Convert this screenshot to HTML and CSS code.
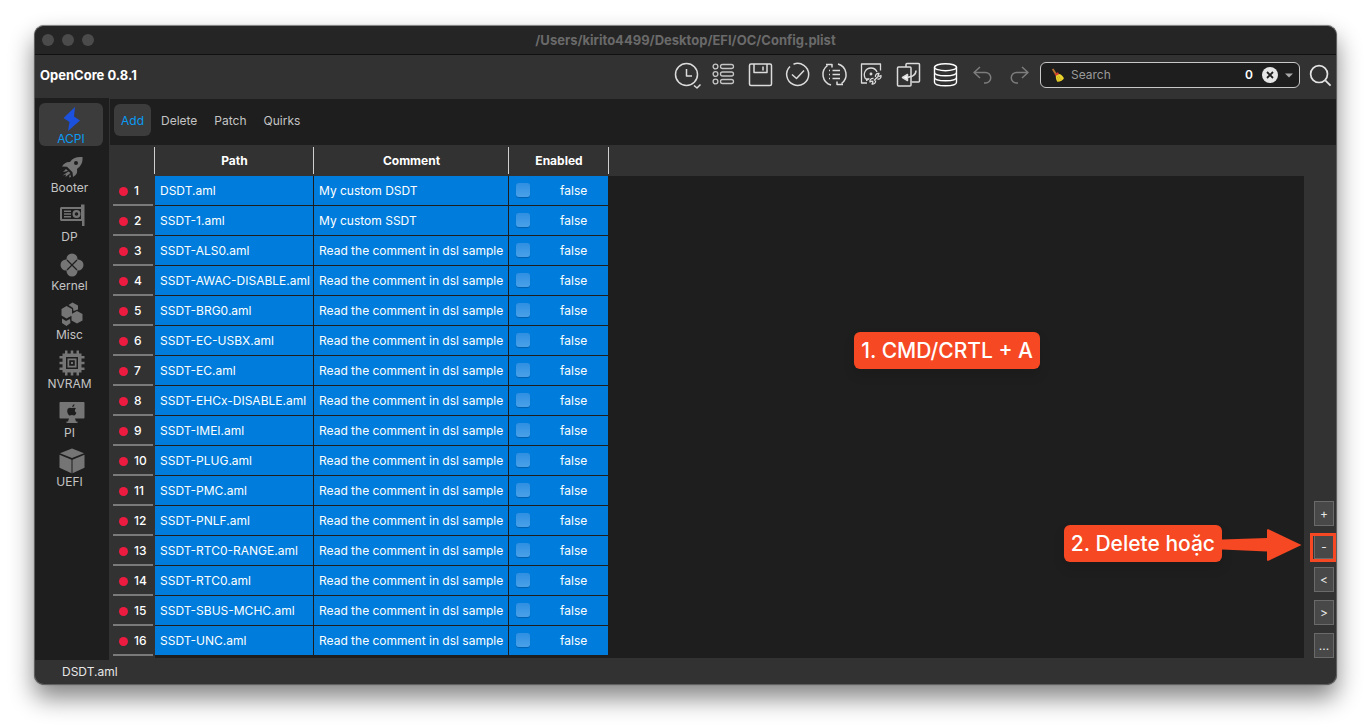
FILE: index.html
```html
<!DOCTYPE html>
<html lang="vi">
<head>
<meta charset="utf-8">
<title>OpenCore Configurator</title>
<link rel="stylesheet" href="styles.css">
</head>
<body>
<div class="window">
  <header class="titlebar">
    <div class="lights"><i></i><i></i><i></i></div>
    <h1 class="title">/Users/kirito4499/Desktop/EFI/OC/Config.plist</h1>
  </header>

  <div class="toolbar">
    <strong class="version">OpenCore 0.8.1</strong>
    <div class="tools">
      <button class="tool" aria-label="Recent files"><svg viewBox="0 0 28 28"><circle cx="13.500" cy="13.500" r="11"/><path d="M13.500 8v7h5.500M21 24.500l3 2.500 3.500-3.500"/></svg></button>
      <button class="tool" aria-label="List"><svg class="thin" viewBox="0 0 28 28"><circle cx="5.500" cy="5.500" r="2.400"/><circle cx="5.500" cy="13" r="2.400"/><circle cx="5.500" cy="20.500" r="2.400"/><rect x="10.500" y="3.500" width="13" height="4" rx="2"/><rect x="10.500" y="11" width="13" height="4" rx="2"/><rect x="10.500" y="18.500" width="13" height="4" rx="2"/></svg></button>
      <button class="tool" aria-label="Save"><svg viewBox="0 0 28 28"><rect x="2.500" y="3" width="22" height="21.500" rx="1.500"/><path d="M7 3v8.500h13V3M16 5.500v4"/></svg></button>
      <button class="tool" aria-label="Validate"><svg viewBox="0 0 28 28"><path d="M6 5.500A11 11 0 1 0 9.500 3.200M8 13.500l4.500 4 7.500-8"/></svg></button>
      <button class="tool" aria-label="Sync list"><svg viewBox="0 0 28 28"><path d="M10 24A11 11 0 0 1 6.500 4.500M17 3A11 11 0 0 1 20.500 22.500M5 3.500h6v3M22 23.500h-6v-3M11.500 9.500h7.500M11.500 13.500h7.500M11.500 17.500h7.500M8 9.500h1M8 13.500h1M8 17.500h1"/></svg></button>
      <button class="tool" aria-label="Mount disk"><svg class="fine" viewBox="0 0 28 28"><path d="M9 22H3.500V3h19v6.500M7.500 18c-3-5.500 0-11 5.500-11 3 0 5 1.500 6 4M7.500 18h3.500M8 19.500c2 0 2-2 3.500-1.500M16 19.500l4-4"/><circle cx="13" cy="13" r=".8"/><path d="M17.500 16c-.5-2 1-4 3.500-3.500l-1 2 1 1 2-1c.5 2.500-1.500 4-3.500 3.500M17.500 19.500c.5 2-1 4-3.500 3.500l1-2-1-1-2 1c-.5-2.500 1.500-4 3.500-3.500"/></svg></button>
      <button class="tool" aria-label="Import"><svg viewBox="0 0 28 28"><path d="M11 6V3.500c0-.5.500-1 1-1h11.500c.6 0 1 .4 1 1V20c0 .6-.4 1-1 1h-7"/><rect x="2.500" y="6" width="13.500" height="19" rx="1"/><path d="M21 9.500c0 4-3 7-12 7"/><path class="solid" d="M7.500 16.500l5-3v6z"/></svg></button>
      <button class="tool" aria-label="Database"><svg class="bright" viewBox="0 0 28 28"><ellipse cx="13.500" cy="6.200" rx="11" ry="3.500"/><path d="M2.500 6.200v15c0 4.700 22 4.700 22 0v-15M2.500 11.200c0 4.700 22 4.700 22 0M2.500 16.200c0 4.700 22 4.700 22 0"/></svg></button>
      <button class="tool dim" aria-label="Undo"><svg viewBox="0 0 28 28"><path d="M11 6L5 11.500l6 5.500M5 11.500h11.500a5 5 0 0 1 0 10.500H15"/></svg></button>
      <button class="tool dim" aria-label="Redo"><svg viewBox="0 0 28 28"><path d="M16 6l6 5.500-6 5.500M22 11.500H10.500a5 5 0 0 0 0 10.500H12"/></svg></button>
    </div>
    <div class="search">
      <svg class="broom" viewBox="0 0 16 16"><path fill="#b8722c" d="M1 1.500L2.600.5l4.200 6.300-2 1.100z"/><path fill="#d63b2f" d="M4 6.300l3.300-1.900 1.800 2.500-3.700 2.200z"/><path fill="#e9d32c" d="M5.200 8.300L9 6.500c1.800.4 3.800 2.200 4.800 4.400-.7 1.900-3.700 3.800-7 3.800-1.100-1.500-1.900-4-1.600-6.400z"/><path stroke="#b99d17" stroke-width=".6" fill="none" d="M6.500 9l2 5M8 8.200l3 5"/></svg>
      <input class="search-input" type="text" placeholder="Search" aria-label="Search">
      <output class="count">0</output>
      <button class="clear" aria-label="Clear search"><svg viewBox="0 0 16 16"><circle cx="8" cy="8" r="8" fill="#e6e6e6"/><path d="M5 5l6 6M11 5l-6 6" stroke="#1e1e1e" stroke-width="1.800"/></svg></button>
      <button class="drop" aria-label="Search history"><svg viewBox="0 0 8 5"><path d="M0 .5h8l-4 4z" fill="#aaa"/></svg></button>
    </div>
    <button class="find" aria-label="Find"><svg viewBox="0 0 24 24"><circle cx="10.500" cy="10.500" r="8.800"/><path d="M17 17l5.500 5.500"/></svg></button>
  </div>

  <div class="body">
    <nav class="sidebar">
      <a class="nav active" href="#acpi"><svg viewBox="0 0 26 26"><path fill="#1b51dc" d="M16 2L4.500 13l6 4L9 26 21 15.500l-6-4z"/></svg>ACPI</a>
      <a class="nav" href="#booter"><svg viewBox="0 0 26 26"><path d="M23.500 3c-6-.5-10 1-12.500 5-3-.5-6 1-8 4.500l5 .3 5.500 5.500.5 4.700c4-2.500 4.500-4.500 4-8C22 12 24 8.500 23.500 3z"/><circle cx="17" cy="9" r="2" fill="#1e1e1e"/><path d="M7 15l2 2-5 1zM9.500 17.500l2 1.500-5 4 .5-2.500-3.500 1zM11 20l1 3-2 .5z"/></svg>Booter</a>
      <a class="nav" href="#dp"><svg viewBox="0 0 26 26"><path fill-rule="evenodd" d="M3 4h19V1.500h3.500V23H23v-5H3c-1.500 0-2-.5-2-2V6c0-1.500.5-2 2-2zm0 2v10h19V6z"/><path d="M5 7.500h7V9H5zM5 10.300h7v1.500H5zM5 13h7v1.500H5z"/><path fill-rule="evenodd" d="M17.500 7a4 4 0 1 0 0 8 4 4 0 1 0 0-8zm0 2.200a1.800 1.800 0 1 1 0 3.600 1.800 1.800 0 1 1 0-3.600z"/></svg>DP</a>
      <a class="nav" href="#kernel"><svg viewBox="0 0 26 26"><circle cx="13" cy="7" r="5.500"/><circle cx="7" cy="13" r="5.500"/><circle cx="19" cy="13" r="5.500"/><circle cx="13" cy="19" r="5.500"/><path d="M8 8l10 10M18 8L8 18" stroke="#1e1e1e" stroke-width="1.200"/></svg>Kernel</a>
      <a class="nav" href="#misc"><svg viewBox="0 0 26 26"><path d="M7.500 5l5.500 3v6.500L7.500 17.500 2.500 14.500V8zM18 10l5.500 3v6.500L18 22.500l-5.500-3V13zM9.500 4l4-2.500 5.500 3v4l-4.500 1.500L14 7zM3 17.500l4 2.500 4-2 .5 4-4 3L3 22z"/></svg>Misc</a>
      <a class="nav" href="#nvram"><svg viewBox="0 0 26 26"><path fill-rule="evenodd" d="M3.500 3.500h19v19h-19zm3.500 3.500v12h12V7z"/><path fill-rule="evenodd" d="M8.500 8.500h9v9h-9zm1.700 1.700v5.600h5.600v-5.600z"/><path d="M12 12h2v2h-2zM6 .5h2.500V4H6zM11.700.5h2.600V4h-2.600zM17.500.5H20V4h-2.500zM6 22h2.500v3.500H6zM11.700 22h2.600v3.500h-2.600zM17.500 22H20v3.500h-2.500zM.5 6H4v2.500H.500zM.5 11.700H4v2.600H.500zM.5 17.500H4V20H.500zM22 6h3.500v2.500H22zM22 11.700h3.500v2.600H22zM22 17.500h3.500V20H22z"/></svg>NVRAM</a>
      <a class="nav" href="#pi"><svg viewBox="0 0 26 26"><path d="M1.500 3h23c.6 0 1 .4 1 1v14.500c0 .6-.4 1-1 1H16l1 3h1.500v1.500h-11v-1.500H9l1-3H1.500c-.6 0-1-.4-1-1V4c0-.6.400-1 1-1z"/><path fill="#1e1e1e" d="M13.200 8.200c0-1.500 1-2.600 2.300-2.900.1 1.500-1 2.800-2.300 2.900zM13 9c.8 0 2.400-1 4 .4-1.800 1.300-1.300 3.500.4 4.300-.5 1.300-1.400 2.800-2.400 2.800-.8 0-1.200-.4-2-.4s-1.300.4-2 .4c-1.300 0-2.800-2.500-2.800-4.600 0-2 1.400-3.200 2.800-3.200.8 0 1.500.3 2 .3z"/></svg>PI</a>
      <a class="nav" href="#uefi"><svg viewBox="0 0 26 26"><path d="M13 .5l12 4.700-12 4.900L1 5.200zM.5 6.800l12 5v13.500l-12-5.500zM25.500 6.800l-12 5v13.500l12-5.500z"/></svg>UEFI</a>
    </nav>

    <main class="content">
      <div class="tabs" role="tablist">
        <button class="tab selected" role="tab" aria-selected="true">Add</button>
        <button class="tab" role="tab">Delete</button>
        <button class="tab" role="tab">Patch</button>
        <button class="tab" role="tab">Quirks</button>
      </div>
      <div class="panel">
        <div class="sheet">
          <table class="entries">
            <colgroup><col class="c-num"><col class="c-path"><col class="c-comment"><col class="c-enabled"><col></colgroup>
            <thead><tr><th></th><th>Path</th><th>Comment</th><th>Enabled</th><th class="rest"></th></tr></thead>
            <tbody>
              <tr><th>1</th><td>DSDT.aml</td><td>My custom DSDT</td><td><label><input type="checkbox">false</label></td><td class="rest"></td></tr>
              <tr><th>2</th><td>SSDT-1.aml</td><td>My custom SSDT</td><td><label><input type="checkbox">false</label></td><td class="rest"></td></tr>
              <tr><th>3</th><td>SSDT-ALS0.aml</td><td>Read the comment in dsl sample</td><td><label><input type="checkbox">false</label></td><td class="rest"></td></tr>
              <tr><th>4</th><td>SSDT-AWAC-DISABLE.aml</td><td>Read the comment in dsl sample</td><td><label><input type="checkbox">false</label></td><td class="rest"></td></tr>
              <tr><th>5</th><td>SSDT-BRG0.aml</td><td>Read the comment in dsl sample</td><td><label><input type="checkbox">false</label></td><td class="rest"></td></tr>
              <tr><th>6</th><td>SSDT-EC-USBX.aml</td><td>Read the comment in dsl sample</td><td><label><input type="checkbox">false</label></td><td class="rest"></td></tr>
              <tr><th>7</th><td>SSDT-EC.aml</td><td>Read the comment in dsl sample</td><td><label><input type="checkbox">false</label></td><td class="rest"></td></tr>
              <tr><th>8</th><td>SSDT-EHCx-DISABLE.aml</td><td>Read the comment in dsl sample</td><td><label><input type="checkbox">false</label></td><td class="rest"></td></tr>
              <tr><th>9</th><td>SSDT-IMEI.aml</td><td>Read the comment in dsl sample</td><td><label><input type="checkbox">false</label></td><td class="rest"></td></tr>
              <tr><th>10</th><td>SSDT-PLUG.aml</td><td>Read the comment in dsl sample</td><td><label><input type="checkbox">false</label></td><td class="rest"></td></tr>
              <tr><th>11</th><td>SSDT-PMC.aml</td><td>Read the comment in dsl sample</td><td><label><input type="checkbox">false</label></td><td class="rest"></td></tr>
              <tr><th>12</th><td>SSDT-PNLF.aml</td><td>Read the comment in dsl sample</td><td><label><input type="checkbox">false</label></td><td class="rest"></td></tr>
              <tr><th>13</th><td>SSDT-RTC0-RANGE.aml</td><td>Read the comment in dsl sample</td><td><label><input type="checkbox">false</label></td><td class="rest"></td></tr>
              <tr><th>14</th><td>SSDT-RTC0.aml</td><td>Read the comment in dsl sample</td><td><label><input type="checkbox">false</label></td><td class="rest"></td></tr>
              <tr><th>15</th><td>SSDT-SBUS-MCHC.aml</td><td>Read the comment in dsl sample</td><td><label><input type="checkbox">false</label></td><td class="rest"></td></tr>
              <tr><th>16</th><td>SSDT-UNC.aml</td><td>Read the comment in dsl sample</td><td><label><input type="checkbox">false</label></td><td class="rest"></td></tr>
            </tbody>
          </table>
          <div class="note note-select">1. CMD/CRTL + A</div>
        </div>
        <div class="actions">
          <button class="act">+</button>
          <div class="marked">
            <button class="act">-</button>
            <div class="pointer">
              <div class="note">2. Delete hoặc</div>
              <svg class="arrow" viewBox="0 0 80 32"><path fill="#f54823" d="M0 10.500L45 9V1c0-1 .7-1 1.500-.7L79.500 16 47 31.500c-1 .5-2 .5-2-.5v-8.500L0 20.500z"/></svg>
            </div>
          </div>
          <button class="act">&lt;</button>
          <button class="act">&gt;</button>
          <button class="act">...</button>
        </div>
      </div>
    </main>
  </div>
  <footer class="status">DSDT.aml</footer>
</div>
</body>
</html>
```
FILE: styles.css
```css
* { box-sizing: border-box; }

body {
  margin: 0;
  min-height: 100vh;
  padding: 25px 34px 41px;
  display: flex;
  background: #fff;
  font: 12px/16px Inter, "Noto Sans", sans-serif;
  color: #e6e6e6;
}

button {
  padding: 0;
  border: 0;
  background: none;
  font: inherit;
  color: inherit;
}

svg { display: block; }

.window {
  flex: 1;
  min-width: 0;
  display: flex;
  flex-direction: column;
  border: 1px solid #606060;
  border-top-color: #858585;
  border-radius: 10px;
  background: #323232;
  box-shadow: 0 0 1px rgba(0, 0, 0, .5), 0 13px 24px rgba(0, 0, 0, .48);
}

/* Title bar */
.titlebar {
  display: grid;
  grid-template-columns: 1fr auto 1fr;
  align-items: center;
  height: 29px;
  padding: 0 7px;
  border-bottom: 1px solid #101010;
  border-radius: 9px 9px 0 0;
  background: #252525;
}

.lights { display: flex; gap: 8px; }

.lights i {
  width: 12px;
  height: 12px;
  border-radius: 50%;
  background: #4b4b4b;
}

.title {
  margin: 0;
  font-size: 13px;
  font-weight: 700;
  color: #6a6a6a;
}

/* Toolbar */
.toolbar {
  display: flex;
  align-items: center;
  height: 43px;
  padding: 0 4px 3px 5px;
}

.version { flex: 1; font-size: 13px; color: #fff; font-weight: 700; }

.tools { display: flex; gap: 9px; margin-right: 6px; }

.tool { width: 28px; height: 28px; }

.tool svg {
  width: 28px;
  height: 28px;
  fill: none;
  stroke: #dcdcdc;
  stroke-width: 1.5;
  stroke-linejoin: round;
}

.tool svg.thin { stroke: #c4c4c4; stroke-width: 1.3; }
.tool svg.fine { stroke-width: 1.3; }
.tool svg.bright { stroke: #fff; stroke-width: 1.4; }
.tool .solid { fill: #fff; }
.tool.dim svg { stroke: #7d7d7d; }

.search {
  display: flex;
  align-items: center;
  width: 260px;
  height: 26px;
  padding: 0 6px 0 10px;
  border: 1px solid #c8c8c8;
  border-radius: 6px;
  background: #1e1e1e;
}

.broom { width: 15px; height: 15px; }

.search-input {
  flex: 1;
  min-width: 0;
  margin-left: 5px;
  padding: 0;
  border: 0;
  outline: 0;
  background: none;
  font: inherit;
  color: #fff;
}

.search-input::placeholder { color: #9a9a9a; opacity: 1; }

.count { margin-right: 9px; font-weight: 600; color: #fff; }

.clear, .clear svg { width: 16px; height: 16px; }

.clear svg { fill: none; }

.drop { margin-left: 7px; }

.drop svg { width: 8px; height: 5px; }

.find { margin-left: 9px; }

.find svg {
  width: 23px;
  height: 23px;
  fill: none;
  stroke: #e4e4e4;
  stroke-width: 1.8;
}

/* Body */
.body { flex: 1; display: flex; min-height: 0; }

.sidebar {
  display: flex;
  flex-direction: column;
  gap: 6px;
  width: 74px;
  padding: 5px 6px 0 4px;
  background: #1e1e1e;
}

.nav {
  display: flex;
  flex-direction: column;
  align-items: center;
  height: 43px;
  padding-top: 2px;
  padding-right: 3px;
  border-radius: 6px;
  line-height: 16px;
  color: #c4c4c4;
  text-decoration: none;
}

.nav svg {
  flex: none;
  width: 26px;
  height: 26px;
  margin-left: 4px;
  fill: #757575;
}

.nav.active {
  padding-right: 0;
  background: #3c3c3c;
  color: #0a9bf5;
}

.nav.active svg { margin-left: 2px; }

.content {
  flex: 1;
  min-width: 0;
  display: flex;
  flex-direction: column;
  margin-left: 1px;
  padding: 1px 0 2px;
}

.tabs {
  display: flex;
  align-items: center;
  gap: 3px;
  height: 46px;
  padding: 0 4px 4px;
  background: #1e1e1e;
}

.tab {
  height: 32px;
  padding: 1px 7px 0;
  border-radius: 6px;
  color: #c4c4c4;
}

.tab.selected { background: #3c3c3c; color: #0a9bf5; }

.panel { flex: 1; display: flex; }

.sheet {
  position: relative;
  flex: 1;
  min-width: 0;
  padding-bottom: 2px;
  background: linear-gradient(90deg, #323232 45px, #1e1e1e 45px);
}

/* Entries table */
.entries {
  width: 100%;
  table-layout: fixed;
  border-collapse: separate;
  border-spacing: 0;
  color: #fff;
}

.c-num { width: 45px; }
.c-path { width: 159px; }
.c-comment { width: 195px; }
.c-enabled { width: 100px; }

.entries thead th {
  height: 31px;
  padding: 0;
  font-weight: 700;
  background: #323232 linear-gradient(#cfcfcf, #cfcfcf) right 2px / 1px 27px no-repeat;
}

.entries thead .rest { background: #323232; }

.entries tbody th {
  height: 30px;
  padding: 0 0 0 9px;
  text-align: left;
  font-weight: 500;
  background: linear-gradient(#7a7a7a, #7a7a7a) 3px 100% / 40px 2px no-repeat;
}

.entries tbody th::before {
  content: "";
  display: inline-block;
  width: 9px;
  height: 9px;
  margin-right: 6px;
  border-radius: 50%;
  background: #ee1b40;
  vertical-align: -1px;
}

.entries td {
  height: 30px;
  padding: 0 0 0 5px;
  border-right: 1px solid #1e1e1e;
  border-bottom: 1px solid #1e1e1e;
  background: #007ddc;
  white-space: nowrap;
}

.entries td.rest { border: 0; background: none; }

.entries label {
  display: flex;
  align-items: center;
  gap: 30px;
  padding-left: 2px;
}

.entries input {
  appearance: none;
  width: 14px;
  height: 14px;
  margin: 0 0 2px;
  border-radius: 3px;
  background: linear-gradient(#2f8fe2, #4ba1e8);
  box-shadow: 0 1px 1px rgba(0, 50, 110, .4);
}

/* Row actions */
.actions {
  display: flex;
  flex-direction: column;
  justify-content: flex-end;
  align-items: flex-end;
  gap: 8px;
  width: 32px;
  padding: 31px 2px 0 0;
}

.act {
  display: block;
  width: 20px;
  height: 25px;
  border: 1px solid #6a6a6a;
  background: #484848;
  line-height: 22px;
}

/* Tutorial callouts */
.note {
  padding: 0 7px;
  border-radius: 6px;
  background: #f54823;
  box-shadow: 0 6px 12px rgba(0, 0, 0, .12);
  font-size: 21px;
  line-height: 37px;
  font-weight: 500;
  color: #fff;
  white-space: nowrap;
}

.note-select { position: absolute; right: 264px; top: 187px; }

.marked { position: relative; }

.marked::before {
  content: "";
  position: absolute;
  inset: -1px -2px -3px -4px;
  border: 3px solid #f54823;
}

.pointer {
  position: absolute;
  right: 32px;
  top: -9px;
  display: flex;
  align-items: center;
}

.arrow { width: 80px; height: 32px; margin-top: 3px; }

.status {
  height: 24px;
  padding: 4px 27px;
}
```
